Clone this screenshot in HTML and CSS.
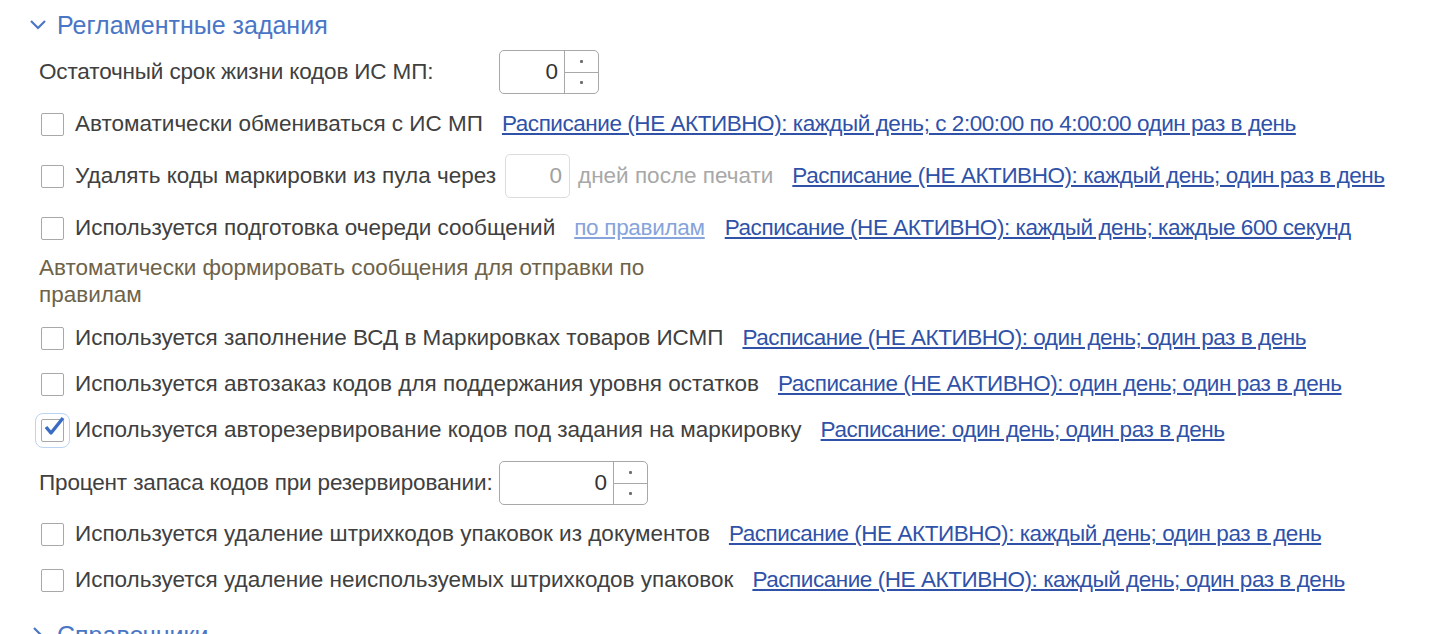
FILE: index.html
```html
<!DOCTYPE html>
<html lang="ru">
<head>
    <meta charset="UTF-8">
    <title>Регламентные задания</title>
    <link rel="stylesheet" href="styles.css">
</head>
<body>
    <div class="group">
        <div class="group-title">
            <svg class="chevron" width="18" height="18" viewBox="0 0 18 18"><path d="M2 5 L9 12 L16 5" fill="none" stroke="#4a76c6" stroke-width="2.2"/></svg>
            <span>Регламентные задания</span>
        </div>
        <div class="group-body">
            <div class="row tall">
                <span class="label label-fixed">Остаточный срок жизни кодов ИС МП:</span>
                <div class="spin spin-short">
                    <span class="spin-value">0</span>
                    <span class="spin-buttons"><i></i><i></i></span>
                </div>
            </div>
            <div class="row tall">
                <span class="check"></span>
                <span class="label">Автоматически обмениваться с ИС МП</span>
                <a class="link" href="#">Расписание (НЕ АКТИВНО): каждый день; с 2:00:00 по 4:00:00 один раз в день</a>
            </div>
            <div class="row tall">
                <span class="check"></span>
                <span class="label label-tight">Удалять коды маркировки из пула через</span>
                <span class="field disabled">0</span>
                <span class="label muted">дней после печати</span>
                <a class="link" href="#">Расписание (НЕ АКТИВНО): каждый день; один раз в день</a>
            </div>
            <div class="row tall">
                <span class="check"></span>
                <span class="label">Используется подготовка очереди сообщений</span>
                <a class="link link-light" href="#">по правилам</a>
                <a class="link" href="#">Расписание (НЕ АКТИВНО): каждый день; каждые 600 секунд</a>
            </div>
            <div class="hint">Автоматически формировать сообщения для отправки по правилам</div>
            <div class="row">
                <span class="check"></span>
                <span class="label">Используется заполнение ВСД в Маркировках товаров ИСМП</span>
                <a class="link" href="#">Расписание (НЕ АКТИВНО): один день; один раз в день</a>
            </div>
            <div class="row">
                <span class="check"></span>
                <span class="label">Используется автозаказ кодов для поддержания уровня остатков</span>
                <a class="link" href="#">Расписание (НЕ АКТИВНО): один день; один раз в день</a>
            </div>
            <div class="row">
                <span class="check checked">
                    <svg width="26" height="24" viewBox="0 0 26 24"><path d="M5 12 L10 18 L22 3" fill="none" stroke="#3b6cc4" stroke-width="3.4" stroke-linejoin="round"/></svg>
                </span>
                <span class="label">Используется авторезервирование кодов под задания на маркировку</span>
                <a class="link" href="#">Расписание: один день; один раз в день</a>
            </div>
            <div class="row spin-row">
                <span class="label label-fixed">Процент запаса кодов при резервировании:</span>
                <div class="spin spin-long">
                    <span class="spin-value">0</span>
                    <span class="spin-buttons"><i></i><i></i></span>
                </div>
            </div>
            <div class="row">
                <span class="check"></span>
                <span class="label">Используется удаление штрихкодов упаковок из документов</span>
                <a class="link" href="#">Расписание (НЕ АКТИВНО): каждый день; один раз в день</a>
            </div>
            <div class="row">
                <span class="check"></span>
                <span class="label">Используется удаление неиспользуемых штрихкодов упаковок</span>
                <a class="link" href="#">Расписание (НЕ АКТИВНО): каждый день; один раз в день</a>
            </div>
        </div>
    </div>
    <div class="group group-next">
        <div class="group-title">
            <svg class="chevron" width="18" height="18" viewBox="0 0 18 18"><path d="M5 2 L12 9 L5 16" fill="none" stroke="#4a76c6" stroke-width="2.2"/></svg>
            <span>Справочники</span>
        </div>
    </div>
</body>
</html>
```

FILE: styles.css
```css
body {
    margin: 0;
    padding: 0;
    background-color: #fff;
    font-family: "Liberation Sans", Arial, sans-serif;
    font-size: 22.5px;
    color: #404040;
}
.group-title {
    display: flex;
    align-items: center;
    gap: 10px;
    height: 42px;
    padding-top: 4px;
    padding-left: 29px;
    font-size: 25px;
    color: #4a76c6;
}
.group-next {
    margin-top: 7px;
}
.group-body {
    display: flex;
    flex-direction: column;
    padding-left: 39px;
}
.row {
    display: flex;
    align-items: center;
    height: 46px;
}
.row.tall {
    height: 52px;
}
.row.spin-row {
    height: 58px;
    padding-top: 2px;
    box-sizing: border-box;
}
.check {
    position: relative;
    width: 21px;
    height: 21px;
    border: 1px solid #a8a8a8;
    border-radius: 2px;
    margin-left: 2px;
    margin-right: 11px;
    flex-shrink: 0;
}
.check.checked {
    outline: 1px solid #bcd3f2;
    outline-offset: 5px;
}
.check svg {
    position: absolute;
    left: -1px;
    top: -5px;
}
.label {
    white-space: nowrap;
    margin-right: 19px;
}
.label-fixed {
    width: 460px;
    margin-right: 0;
    letter-spacing: -0.15px;
}
.label-tight {
    margin-right: 9px;
}
.muted {
    color: #a8a8a8;
}
.link {
    color: #2f52a8;
    text-decoration: underline;
    letter-spacing: -0.45px;
    white-space: nowrap;
    margin-right: 20px;
}
.link-light {
    color: #86a3dc;
    letter-spacing: -0.3px;
}
.field {
    width: 65px;
    height: 44px;
    box-sizing: border-box;
    border: 1px solid #c4c4c4;
    border-radius: 5px;
    display: flex;
    align-items: center;
    justify-content: flex-end;
    padding-right: 7px;
    margin-right: 8px;
}
.field.disabled {
    border-color: #dcdcdc;
    color: #a0a0a0;
}
.spin {
    display: flex;
    height: 44px;
    box-sizing: border-box;
    border: 1px solid #a8a8a8;
    border-radius: 5px;
    color: #333;
}
.spin-short {
    width: 100px;
}
.spin-long {
    width: 149px;
}
.spin-value {
    flex: 1;
    display: flex;
    align-items: center;
    justify-content: flex-end;
    padding-right: 6px;
}
.spin-buttons {
    width: 33px;
    display: flex;
    flex-direction: column;
    border-left: 1px solid #a8a8a8;
}
.spin-buttons i {
    flex: 1;
    display: flex;
    align-items: center;
    justify-content: center;
}
.spin-buttons i + i {
    border-top: 1px solid #a8a8a8;
}
.spin-buttons i::before {
    content: "";
    width: 3px;
    height: 3px;
    border-radius: 1px;
    background-color: #707070;
}
.hint {
    color: #6e6349;
    line-height: 27px;
    width: 620px;
    margin-bottom: 7px;
}
```
